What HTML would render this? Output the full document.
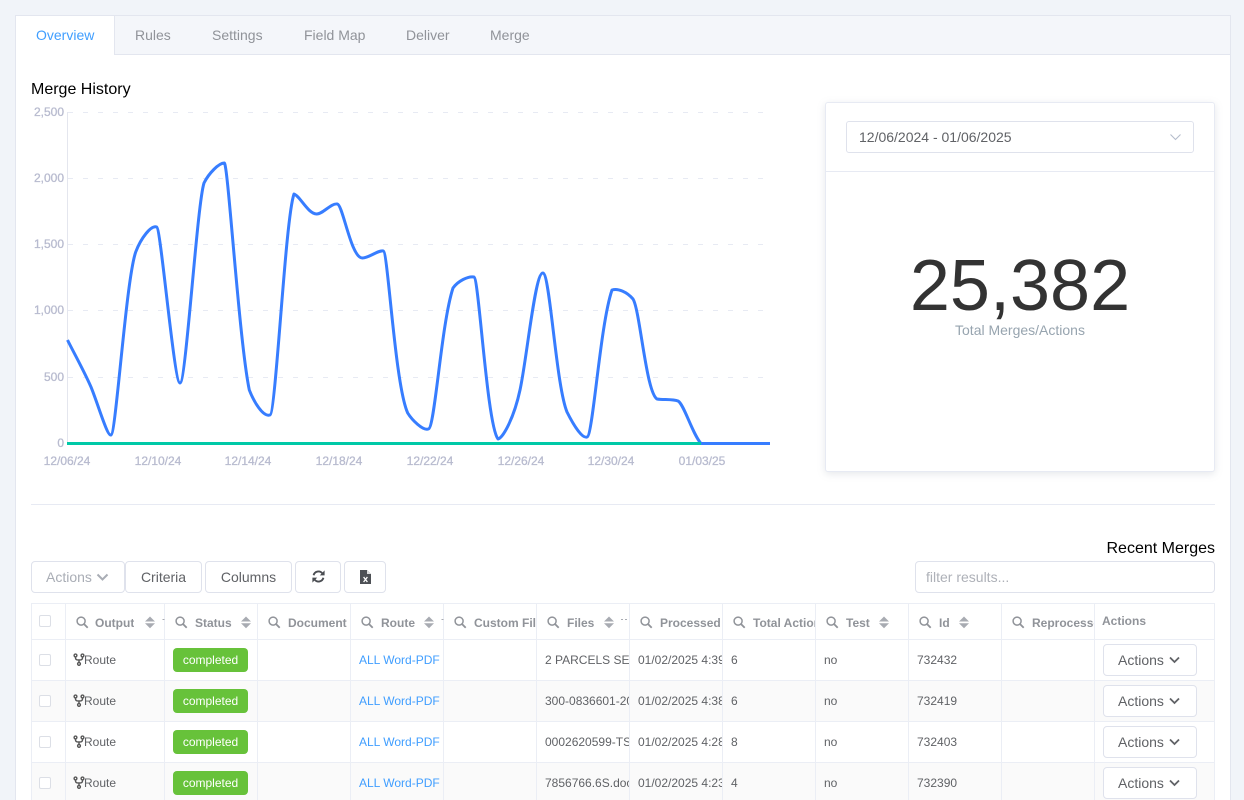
<!DOCTYPE html>
<html><head><meta charset="utf-8"><title>Merge History</title>
<style>
*{box-sizing:border-box}
html,body{margin:0;padding:0;width:1244px;height:800px;overflow:hidden;background:#f1f4f9;font-family:"Liberation Sans",sans-serif}
#root{position:relative;width:1244px;height:800px;overflow:hidden;background:#f1f4f9}
.a{position:absolute}
#wrap{position:absolute;left:15px;top:15px;width:1216px;height:785px;background:#fff;border:1px solid #e3e6ef;border-bottom:none}
#bar{position:absolute;left:15px;top:15px;width:1216px;height:40px;background:#f4f6fa;border:1px solid #e3e6ef}
#act{position:absolute;left:15px;top:15px;width:100px;height:40px;background:#fff;border:1px solid #e3e6ef;border-bottom:none}
.tab{position:absolute;top:27px;font-size:14px;line-height:16px;color:#909399}
.btn{position:absolute;top:561px;height:32px;background:#fff;border:1px solid #dfe2ec;border-radius:4px;font-size:14px;line-height:30px;text-align:center;color:#606266}
.yl{position:absolute;left:20px;width:44px;text-align:right;font-size:12px;line-height:14px;color:#b8bbcf;-webkit-text-stroke:.3px #b8bbcf}
.xl{position:absolute;top:454px;width:70px;text-align:center;font-size:12px;line-height:14px;color:#b8bbcf;-webkit-text-stroke:.3px #b8bbcf}
.v{position:absolute;top:603px;width:1px;height:197px;background:#ebeef5}
.h{position:absolute;left:31px;width:1184px;height:1px;background:#ebeef5}
.th{position:absolute;top:616px;font-size:12px;font-weight:bold;line-height:14px;color:#909399;white-space:nowrap;overflow:hidden}
.td{position:absolute;font-size:12px;line-height:14px;color:#606266;white-space:nowrap;overflow:hidden}
.cb{position:absolute;left:39px;width:12px;height:12px;background:#fff;border:1px solid #dcdfe6;border-radius:2px}
.bd{position:absolute;left:173px;width:75px;height:24px;background:#67c23a;border-radius:4px;color:#fff;font-size:12px;line-height:24px;text-align:center}
.lk{color:#409eff}
.ab{position:absolute;left:1103px;width:94px;height:32px;background:#fff;border:1px solid #dfe2ec;border-radius:4px;font-size:14px;line-height:30px;color:#606266;padding-left:14px}
svg{position:absolute;overflow:visible}
</style></head><body>
<div id="root">
<svg width="0" height="0" style="position:absolute"><defs>
<g id="s" fill="none" stroke="#909399"><circle cx="4.6" cy="4.6" r="4" stroke-width="1.5"/><path d="M7.6 7.6L11.2 11.2" stroke-width="1.8"/></g>
<g id="o" fill="#a8abb2"><path d="M5 0L10 5H0zM0 6.8H10L5 11.8z"/></g>
<g id="f" fill="none" stroke="#555" stroke-width="1.4"><circle cx="2" cy="2" r="1.4"/><circle cx="9" cy="2" r="1.4"/><circle cx="5.5" cy="10.4" r="1.4"/><path d="M2 3.4V4.2Q2 6.2 4 6.4H7Q9 6.2 9 4.2V3.4M5.5 6.4V9"/></g>
<path id="c" d="M0 0L4.5 4.5L9 0" fill="none" stroke="#606266" stroke-width="1.8"/>
</defs></svg>

<div id="wrap"></div><div id="bar"></div><div id="act"></div>
<div class="tab" style="left:36px;color:#409eff">Overview</div>
<div class="tab" style="left:135px">Rules</div>
<div class="tab" style="left:212px">Settings</div>
<div class="tab" style="left:304px">Field Map</div>
<div class="tab" style="left:406px">Deliver</div>
<div class="tab" style="left:490px">Merge</div>

<div class="a" style="left:31px;top:81px;font-size:16px;line-height:18px;color:#000">Merge History</div>

<svg style="left:0;top:0" width="1244" height="800">
<g stroke="#e7eaf3" stroke-width="1" stroke-dasharray="5 10" fill="none">
<path d="M68 112.5H765M68 178.5H765M68 244.5H765M68 310.5H765M68 377.5H765"/></g>
<path d="M67.5 112V443" stroke="#e4e6ee" fill="none"/>
<path d="M67.5 340C75 355 84 371 91 387C98 404 107 436 111 435C116 434 126 280 135.7 252C141 238 151 225 156.7 227C161 229 174 383 180 383C186 383 197 205 204 183C209 173 219 163 224.3 163C228 163 239 340 249.3 390C254 402 263 417 269.7 415C276 415 285 220 294 194C300 196 308 214 316.7 214C323 214 331 203 337.3 204C343 205 351 258 362.3 258C369 258 378 250 383.3 251C388 252 395 385 407.7 413C412 420 423 431 428.3 429C435 428 441 325 453 288C458 281 468 276 474 277C479 279 487 425 498 439C503 438 514 418 520 390C527 358 535 272 543 273C550 274 556 385 567 412C573 424 582 439 587 437C593 436 600 325 612 290C618 288 627 292 633 299C640 310 646 392 657 399C663 400 673 399 678 401C684 404 692 433 701 443.5L770 443.5" fill="none" stroke="#377dff" stroke-width="3" stroke-linejoin="round"/>
<path d="M67 443.5H701" stroke="#00c9a7" stroke-width="3" fill="none"/>
</svg>
<div class="yl" style="top:105px">2,500</div>
<div class="yl" style="top:171px">2,000</div>
<div class="yl" style="top:237px">1,500</div>
<div class="yl" style="top:303px">1,000</div>
<div class="yl" style="top:370px">500</div>
<div class="yl" style="top:436px">0</div>
<div class="xl" style="left:32px">12/06/24</div>
<div class="xl" style="left:123px">12/10/24</div>
<div class="xl" style="left:213px">12/14/24</div>
<div class="xl" style="left:304px">12/18/24</div>
<div class="xl" style="left:395px">12/22/24</div>
<div class="xl" style="left:486px">12/26/24</div>
<div class="xl" style="left:576px">12/30/24</div>
<div class="xl" style="left:667px">01/03/25</div>

<div class="a" style="left:825px;top:102px;width:390px;height:370px;background:#fff;border:1px solid #e7eaf3;border-radius:3px;box-shadow:0 2px 8px rgba(140,152,164,.22)"></div>
<div class="a" style="left:846px;top:121px;width:348px;height:32px;border:1px solid #dfe2ec;border-radius:3px;font-size:14px;line-height:30px;color:#606266;padding-left:12px">12/06/2024 - 01/06/2025</div>
<svg style="left:1170px;top:134px" width="11" height="7"><path d="M0.5 0.5L5.5 5.5L10.5 0.5" fill="none" stroke="#b4bccc" stroke-width="1.1"/></svg>
<div class="a" style="left:826px;top:171px;width:388px;height:1px;background:#e7eaf3"></div>
<div class="a" style="left:826px;top:245px;width:388px;text-align:center;font-size:72px;line-height:83px;color:#333">25,382</div>
<div class="a" style="left:826px;top:322px;width:388px;text-align:center;font-size:14px;line-height:16px;color:#97a4af">Total Merges/Actions</div>

<div class="a" style="left:31px;top:504px;width:1184px;height:1px;background:#e7eaf3"></div>
<div class="a" style="left:915px;top:540px;width:300px;text-align:right;font-size:16px;line-height:18px;color:#000">Recent Merges</div>

<div class="btn" style="left:31px;width:94px;color:#a9adb5;text-align:left;padding-left:14px">Actions</div>
<svg style="left:97px;top:574px" width="11" height="7"><path d="M0.5 0.5L5.5 5.5L10.5 0.5" fill="none" stroke="#a9adb5" stroke-width="2"/></svg>
<div class="btn" style="left:125px;width:77px">Criteria</div>
<div class="btn" style="left:205px;width:87px">Columns</div>
<div class="btn" style="left:295px;width:46px"></div>
<div class="btn" style="left:344px;width:42px"></div>
<svg style="left:312px;top:570px" width="13" height="13" viewBox="0 0 13 13"><path d="M1.6 5.2A5 5 0 0 1 10.4 3.4M11.4 7.8A5 5 0 0 1 2.6 9.6" fill="none" stroke="#4a4d52" stroke-width="1.9"/><path d="M12.6 0.4V5.4H7.8zM0.4 12.6V7.6H5.2z" fill="#4a4d52"/></svg>
<svg style="left:360px;top:570px" width="11" height="14" viewBox="0 0 11 14"><path d="M0 0H7L11 4V14H0z" fill="#4d5055"/><path d="M7 0V4H11" fill="#fff" opacity=".8"/><path d="M3.6 7L7.4 12M7.4 7L3.6 12" stroke="#fff" stroke-width="1.3" fill="none"/></svg>
<div class="a" style="left:915px;top:561px;width:300px;height:32px;border:1px solid #dfe2ec;border-radius:4px;font-size:14px;line-height:30px;color:#aeb1b8;padding-left:10px">filter results...</div>

<!-- table -->
<div class="a" style="left:31px;top:681px;width:1184px;height:41px;background:#fafafa"></div>
<div class="a" style="left:31px;top:763px;width:1184px;height:37px;background:#fafafa"></div>
<div class="h" style="top:603px"></div><div class="h" style="top:639px"></div><div class="h" style="top:680px"></div><div class="h" style="top:721px"></div><div class="h" style="top:762px"></div>
<div class="v" style="left:31px"></div><div class="v" style="left:65px"></div><div class="v" style="left:164px"></div><div class="v" style="left:257px"></div><div class="v" style="left:350px"></div><div class="v" style="left:443px"></div><div class="v" style="left:536px"></div><div class="v" style="left:629px"></div><div class="v" style="left:722px"></div><div class="v" style="left:815px"></div><div class="v" style="left:908px"></div><div class="v" style="left:1001px"></div><div class="v" style="left:1094px"></div><div class="v" style="left:1214px"></div>

<div class="cb" style="top:615px"></div>
<svg style="left:0;top:0" width="1244" height="800">
<use href="#s" x="76.5" y="616.5"/><use href="#s" x="175.5" y="616.5"/><use href="#s" x="268.5" y="616.5"/><use href="#s" x="361.5" y="616.5"/><use href="#s" x="454.5" y="616.5"/><use href="#s" x="547.5" y="616.5"/><use href="#s" x="640.5" y="616.5"/><use href="#s" x="733.5" y="616.5"/><use href="#s" x="826.5" y="616.5"/><use href="#s" x="919.5" y="616.5"/><use href="#s" x="1012.5" y="616.5"/>
<use href="#o" x="145" y="616.5"/><use href="#o" x="241" y="616.5"/><use href="#o" x="424" y="616.5"/><use href="#o" x="604" y="616.5"/><use href="#o" x="879" y="616.5"/><use href="#o" x="959" y="616.5"/>
<path d="M162.5 619.5h2M441.5 619.5h2" stroke="#a8abb2" fill="none"/>
<path d="M621 619.5h2M625 619.5h2" stroke="#a8abb2" fill="none"/>
<use href="#f" x="73.5" y="653.5"/><use href="#f" x="73.5" y="694.5"/><use href="#f" x="73.5" y="735.5"/><use href="#f" x="73.5" y="776.5"/>
</svg>
<div class="th" style="left:95px">Output</div>
<div class="th" style="left:195px">Status</div>
<div class="th" style="left:288px;width:61px">Document</div>
<div class="th" style="left:381px">Route</div>
<div class="th" style="left:474px;width:62px">Custom File</div>
<div class="th" style="left:567px">Files</div>
<div class="th" style="left:660px;width:61px">Processed</div>
<div class="th" style="left:753px;width:62px">Total Actions</div>
<div class="th" style="left:846px">Test</div>
<div class="th" style="left:939px">Id</div>
<div class="th" style="left:1032px;width:62px">Reprocessed</div>
<div class="th" style="left:1102px;top:614px">Actions</div>

<!-- row 1 -->
<div class="cb" style="top:654px"></div><div class="td" style="left:84px;top:653px">Route</div><div class="bd" style="top:648px">completed</div><div class="td lk" style="left:359px;top:653px">ALL Word-PDF</div><div class="td" style="left:545px;top:653px;width:84px">2 PARCELS SEPT</div><div class="td" style="left:638px;top:653px;width:84px">01/02/2025 4:39 PM</div><div class="td" style="left:731px;top:653px">6</div><div class="td" style="left:824px;top:653px">no</div><div class="td" style="left:917px;top:653px">732432</div><div class="ab" style="top:644px">Actions</div>
<!-- row 2 -->
<div class="cb" style="top:695px"></div><div class="td" style="left:84px;top:694px">Route</div><div class="bd" style="top:689px">completed</div><div class="td lk" style="left:359px;top:694px">ALL Word-PDF</div><div class="td" style="left:545px;top:694px;width:84px">300-0836601-20.doc</div><div class="td" style="left:638px;top:694px;width:84px">01/02/2025 4:38 PM</div><div class="td" style="left:731px;top:694px">6</div><div class="td" style="left:824px;top:694px">no</div><div class="td" style="left:917px;top:694px">732419</div><div class="ab" style="top:685px">Actions</div>
<!-- row 3 -->
<div class="cb" style="top:736px"></div><div class="td" style="left:84px;top:735px">Route</div><div class="bd" style="top:730px">completed</div><div class="td lk" style="left:359px;top:735px">ALL Word-PDF</div><div class="td" style="left:545px;top:735px;width:84px">0002620599-TS.doc</div><div class="td" style="left:638px;top:735px;width:84px">01/02/2025 4:28 PM</div><div class="td" style="left:731px;top:735px">8</div><div class="td" style="left:824px;top:735px">no</div><div class="td" style="left:917px;top:735px">732403</div><div class="ab" style="top:726px">Actions</div>
<!-- row 4 -->
<div class="cb" style="top:777px"></div><div class="td" style="left:84px;top:776px">Route</div><div class="bd" style="top:771px">completed</div><div class="td lk" style="left:359px;top:776px">ALL Word-PDF</div><div class="td" style="left:545px;top:776px;width:84px">7856766.6S.docx</div><div class="td" style="left:638px;top:776px;width:84px">01/02/2025 4:23 PM</div><div class="td" style="left:731px;top:776px">4</div><div class="td" style="left:824px;top:776px">no</div><div class="td" style="left:917px;top:776px">732390</div><div class="ab" style="top:767px">Actions</div>

<svg style="left:0;top:0" width="1244" height="800">
<use href="#c" x="1170" y="657.5"/><use href="#c" x="1170" y="698.5"/><use href="#c" x="1170" y="739.5"/><use href="#c" x="1170" y="780.5"/>
</svg>
</div>
</body></html>
